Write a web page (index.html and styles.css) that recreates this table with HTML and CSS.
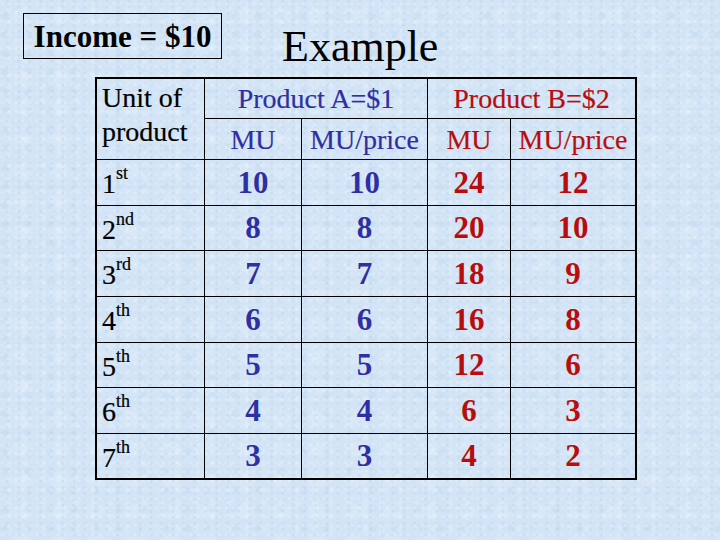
FILE: index.html
```html
<!DOCTYPE html>
<html lang="en">
<head>
<meta charset="utf-8">
<title>Example</title>
<link rel="stylesheet" href="styles.css">
</head>
<body>
<div class="slide">
  <div class="top">
    <div class="income">Income = $10</div>
    <h1 class="title">Example</h1>
  </div>
  <table class="mu">
    <colgroup>
      <col class="c1"><col class="c2"><col class="c3"><col class="c4"><col class="c5">
    </colgroup>
    <tr class="h1">
      <td class="unit br" rowspan="2">Unit of<br>product</td>
      <td class="head a br bb" colspan="2">Product A=$1</td>
      <td class="head b bb" colspan="2">Product B=$2</td>
    </tr>
    <tr class="h2">
      <td class="head a br">MU</td>
      <td class="head a br">MU/price</td>
      <td class="head b br">MU</td>
      <td class="head b">MU/price</td>
    </tr>
    <tr class="r46 first">
      <td class="ord br">1<span class="sup">st</span></td>
      <td class="num a br">10</td><td class="num a br">10</td><td class="num b br">24</td><td class="num b">12</td>
    </tr>
    <tr class="r45">
      <td class="ord br">2<span class="sup">nd</span></td>
      <td class="num a br">8</td><td class="num a br">8</td><td class="num b br">20</td><td class="num b">10</td>
    </tr>
    <tr class="r46">
      <td class="ord br">3<span class="sup">rd</span></td>
      <td class="num a br">7</td><td class="num a br">7</td><td class="num b br">18</td><td class="num b">9</td>
    </tr>
    <tr class="r46">
      <td class="ord br">4<span class="sup">th</span></td>
      <td class="num a br">6</td><td class="num a br">6</td><td class="num b br">16</td><td class="num b">8</td>
    </tr>
    <tr class="r45">
      <td class="ord br">5<span class="sup">th</span></td>
      <td class="num a br">5</td><td class="num a br">5</td><td class="num b br">12</td><td class="num b">6</td>
    </tr>
    <tr class="r46">
      <td class="ord br">6<span class="sup">th</span></td>
      <td class="num a br">4</td><td class="num a br">4</td><td class="num b br">6</td><td class="num b">3</td>
    </tr>
    <tr class="r45 last">
      <td class="ord br">7<span class="sup">th</span></td>
      <td class="num a br">3</td><td class="num a br">3</td><td class="num b br">4</td><td class="num b">2</td>
    </tr>
  </table>
</div>
</body>
</html>
```
FILE: styles.css
```css
html, body {
  margin: 0;
  padding: 0;
}

body {
  font-family: "Liberation Serif", "Times New Roman", serif;
  color: #000;
}

.slide {
  width: 720px;
  height: 540px;
  overflow: hidden;
  background-color: #d2e4f5;
  background-image:
    radial-gradient(circle at 30% 40%, rgba(255,255,255,0.22) 0 1px, rgba(255,255,255,0) 2px),
    radial-gradient(circle at 70% 20%, rgba(170,200,230,0.22) 0 1px, rgba(170,200,230,0) 2px),
    radial-gradient(circle at 50% 70%, rgba(255,255,255,0.18) 0 2px, rgba(255,255,255,0) 4px),
    radial-gradient(circle at 20% 80%, rgba(175,205,233,0.2) 0 2px, rgba(175,205,233,0) 5px),
    radial-gradient(ellipse at 60% 50%, rgba(232,242,251,0.3) 0 6px, rgba(232,242,251,0) 14px);
  background-size: 7px 9px, 11px 6px, 17px 13px, 23px 19px, 37px 31px;
}

.top {
  display: flex;
  align-items: flex-start;
  height: 77px;
}

.income {
  box-sizing: border-box;
  width: 199px;
  height: 46px;
  margin: 13px 0 0 23px;
  border: 1px solid #000;
  display: flex;
  align-items: center;
  justify-content: center;
  font-family: "Liberation Serif", "Times New Roman", serif;
  font-weight: bold;
  font-size: 31px;
  line-height: 1;
  padding-top: 1px;
}

.title {
  margin: 23px 0 0 60px;
  font-family: "Liberation Serif", "Times New Roman", serif;
  font-size: 44px;
  font-weight: normal;
  line-height: 1.107;
}

.mu {
  margin-left: 95px;
  border: 2px solid #000;
  border-collapse: separate;
  border-spacing: 0;
  table-layout: fixed;
  width: 542px;
  font-family: "Liberation Serif", "Times New Roman", serif;
}

.c1 { width: 108px; }
.c2 { width: 97px; }
.c3 { width: 126px; }
.c4 { width: 83px; }
.c5 { width: 124px; }

.mu td {
  box-sizing: border-box;
  padding: 0;
  border-bottom: 1px solid #000;
  text-align: center;
  vertical-align: middle;
  white-space: nowrap;
  font-family: "Liberation Serif", "Times New Roman", serif;
}

.mu tr.last td {
  border-bottom: none;
}

.mu tr.h1 td.head {
  border-bottom: 1px solid #000;
}

.mu td.br {
  border-right: 1px solid #000;
}

.h1 { height: 40px; }
.h2 { height: 41px; }
.r46 { height: 46px; }
.r45 { height: 45px; }
.mu tr.last { height: 44px; }

.mu td.unit {
  text-align: left;
  vertical-align: top;
  padding: 2px 0 0 5px;
  font-size: 28px;
  line-height: 34px;
  -webkit-text-stroke: 0.2px currentColor;
}

.head {
  font-size: 28px;
  line-height: 31px;
  -webkit-text-stroke: 0.2px currentColor;
}

.a { color: #2f2fa3; }
.b { color: #b80d0d; }

.num {
  font-size: 31px;
  font-weight: bold;
  line-height: 34px;
}

.mu td.ord {
  text-align: left;
  padding: 3px 0 0 5px;
  font-size: 28px;
  line-height: 34px;
  -webkit-text-stroke: 0.2px currentColor;
}

.sup {
  font-size: 18px;
  line-height: 0;
  vertical-align: 14px;
}
```
